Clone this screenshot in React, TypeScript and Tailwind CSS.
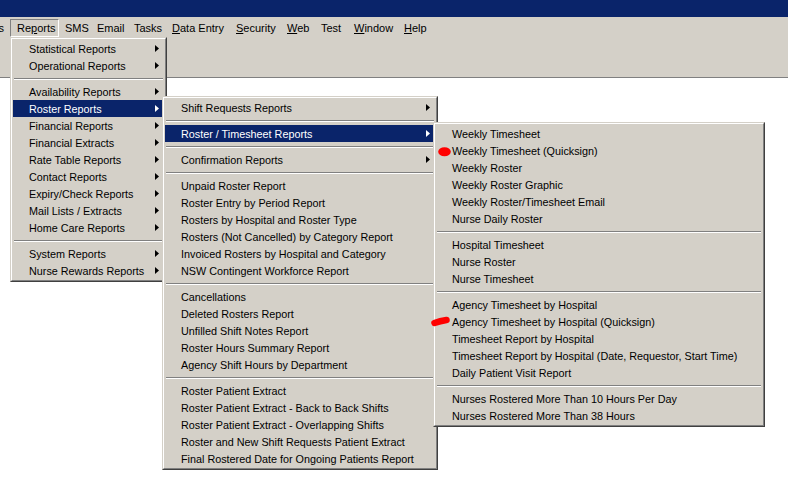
import React from "react";

type Item = { t?: string; a?: boolean; hl?: boolean; sep?: boolean };

const S: Item = { sep: true };

const menu1: Item[] = [
  { t: "Statistical Reports", a: true },
  { t: "Operational Reports", a: true },
  S,
  { t: "Availability Reports", a: true },
  { t: "Roster Reports", a: true, hl: true },
  { t: "Financial Reports", a: true },
  { t: "Financial Extracts", a: true },
  { t: "Rate Table Reports", a: true },
  { t: "Contact Reports", a: true },
  { t: "Expiry/Check Reports", a: true },
  { t: "Mail Lists / Extracts", a: true },
  { t: "Home Care Reports", a: true },
  S,
  { t: "System Reports", a: true },
  { t: "Nurse Rewards Reports", a: true },
];

const menu2: Item[] = [
  { t: "Shift Requests Reports", a: true },
  S,
  { t: "Roster / Timesheet Reports", a: true, hl: true },
  S,
  { t: "Confirmation Reports", a: true },
  S,
  { t: "Unpaid Roster Report" },
  { t: "Roster Entry by Period Report" },
  { t: "Rosters by Hospital and Roster Type" },
  { t: "Rosters (Not Cancelled) by Category Report" },
  { t: "Invoiced Rosters by Hospital and Category" },
  { t: "NSW Contingent Workforce Report" },
  S,
  { t: "Cancellations" },
  { t: "Deleted Rosters Report" },
  { t: "Unfilled Shift Notes Report" },
  { t: "Roster Hours Summary Report" },
  { t: "Agency Shift Hours by Department" },
  S,
  { t: "Roster Patient Extract" },
  { t: "Roster Patient Extract - Back to Back Shifts" },
  { t: "Roster Patient Extract - Overlapping Shifts" },
  { t: "Roster and New Shift Requests Patient Extract" },
  { t: "Final Rostered Date for Ongoing Patients Report" },
];

const menu3: Item[] = [
  { t: "Weekly Timesheet" },
  { t: "Weekly Timesheet (Quicksign)" },
  { t: "Weekly Roster" },
  { t: "Weekly Roster Graphic" },
  { t: "Weekly Roster/Timesheet Email" },
  { t: "Nurse Daily Roster" },
  S,
  { t: "Hospital Timesheet" },
  { t: "Nurse Roster" },
  { t: "Nurse Timesheet" },
  S,
  { t: "Agency Timesheet by Hospital" },
  { t: "Agency Timesheet by Hospital (Quicksign)" },
  { t: "Timesheet Report by Hospital" },
  { t: "Timesheet Report by Hospital (Date, Requestor, Start Time)" },
  { t: "Daily Patient Visit Report" },
  S,
  { t: "Nurses Rostered More Than 10 Hours Per Day" },
  { t: "Nurses Rostered More Than 38 Hours" },
];

function Arrow({ white }: { white?: boolean }) {
  return (
    <svg
      width="4"
      height="7"
      viewBox="0 0 4 7"
      className="absolute right-[5px] top-[5px]"
    >
      <polygon points="0,0 4,3.5 0,7" fill={white ? "#ffffff" : "#000000"} />
    </svg>
  );
}

function Menu({ items, className }: { items: Item[]; className: string }) {
  return (
    <div
      className={
        "absolute border border-t-[#d4d0c8] border-l-[#d4d0c8] border-b-[#404040] border-r-[#404040] bg-[#d4d0c8] " +
        className
      }
    >
      <div className="border border-t-white border-l-white border-b-[#808080] border-r-[#808080] p-[1px]">
        {items.map((it, i) =>
          it.sep ? (
            <div key={i} className="h-[9px] pt-[4px] px-[1px]">
              <div className="h-[2px] border-t border-t-[#808080] border-b border-b-white" />
            </div>
          ) : (
            <div
              key={i}
              className={
                "relative h-[17px] whitespace-nowrap pl-[16px] pr-[5px] pt-[2px] leading-[15px] " +
                (it.hl ? "bg-[#0a246a] text-white" : "text-black")
              }
            >
              {it.t}
              {it.a && <Arrow white={it.hl} />}
            </div>
          )
        )}
      </div>
    </div>
  );
}

function BarItem({
  w,
  children,
  pressed,
}: {
  w: string;
  children: React.ReactNode;
  pressed?: boolean;
}) {
  return (
    <div
      className={
        "flex h-[18px] items-center whitespace-nowrap pl-[6px] " +
        w +
        (pressed
          ? " border border-t-[#808080] border-l-[#808080] border-b-white border-r-white pl-[5px]"
          : "")
      }
    >
      {children}
    </div>
  );
}

export default function App() {
  return (
    <div className="relative h-[483px] w-[788px] overflow-hidden bg-white font-['Liberation_Sans',Arial,sans-serif] text-[11px] text-black">
      <div className="h-[17px] bg-[#0a246a]" />
      <div className="h-[61px] border-b border-b-[#808080] bg-[#d4d0c8]">
        <div className="flex h-[20px] items-start pt-[2px]">
          <div className="flex h-[18px] w-[10px] items-center justify-end overflow-hidden pr-[6px]">
            s
          </div>
          <BarItem w="w-[49px]" pressed>
            <span>
              Re<span className="underline">p</span>orts
            </span>
          </BarItem>
          <BarItem w="w-[32px]">SMS</BarItem>
          <BarItem w="w-[37px]">Email</BarItem>
          <BarItem w="w-[38px]">Tasks</BarItem>
          <BarItem w="w-[64px]">
            <span>
              <span className="underline">D</span>ata Entry
            </span>
          </BarItem>
          <BarItem w="w-[51px]">
            <span>
              <span className="underline">S</span>ecurity
            </span>
          </BarItem>
          <BarItem w="w-[34px]">
            <span>
              <span className="underline">W</span>eb
            </span>
          </BarItem>
          <BarItem w="w-[33px]">Test</BarItem>
          <BarItem w="w-[50px]">
            <span>
              <span className="underline">W</span>indow
            </span>
          </BarItem>
          <BarItem w="w-[34px]">
            <span>
              <span className="underline">H</span>elp
            </span>
          </BarItem>
        </div>
      </div>

      <Menu items={menu1} className="left-[10px] top-[37px] w-[157px] text-[10.8px]" />
      <Menu items={menu2} className="left-[162px] top-[96px] w-[276px] text-[10.8px]" />
      <Menu items={menu3} className="left-[433px] top-[122px] w-[332px] text-[10.8px]" />

      <svg
        className="pointer-events-none absolute left-0 top-0"
        width="788"
        height="483"
        viewBox="0 0 788 483"
      >
        <ellipse cx="444.5" cy="151.8" rx="6.3" ry="4.5" fill="#ff0000" />
        <path
          d="M434.5 323 Q440 321 446.5 320"
          stroke="#ff0000"
          strokeWidth="6.5"
          strokeLinecap="round"
          fill="none"
        />
      </svg>
    </div>
  );
}
